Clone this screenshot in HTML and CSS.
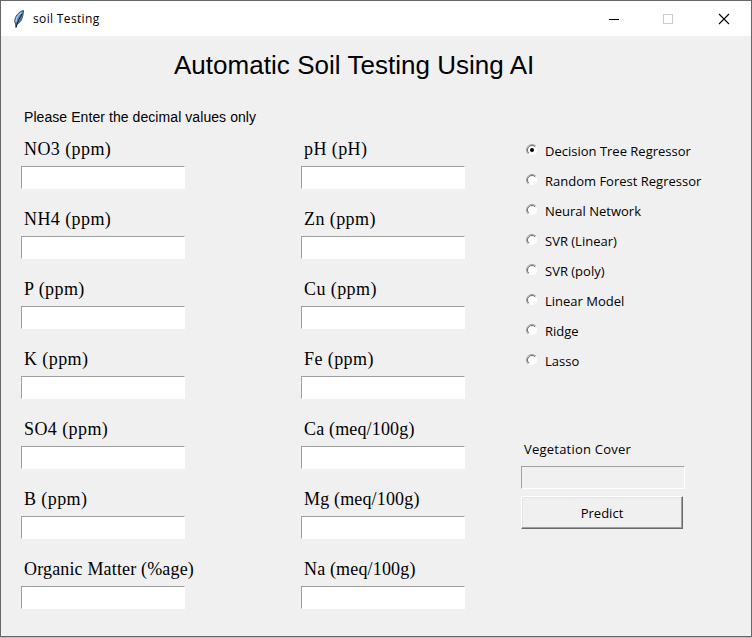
FILE: index.html
```html
<!DOCTYPE html>
<html lang="en">
<head>
<meta charset="utf-8">
<title>soil Testing</title>
<link rel="stylesheet" href="styles.css">
</head>
<body>
<div class="window">
  <header class="titlebar">
    <svg class="feather" width="12" height="18" viewBox="0 0 12 18"><path d="M10.500.5C7 1 3 5 2 9c-.5 2-.3 3.500.6 5l.4 3.500.8-3.500C8 13 10 8 10.500.5z" fill="#4b83b8" stroke="#4c535a" stroke-width="1"/><path d="M8.500 2.500C5 5 3 8.500 3 12" fill="none" stroke="#a9cbe5" stroke-width="1.300"/><path d="M9 4C7 8 4.500 11 3.200 17" fill="none" stroke="#111c28"/></svg>
    <span class="caption">soil Testing</span>
    <svg class="controls" width="124" height="12" viewBox="0 0 124 12" fill="none" shape-rendering="crispEdges"><path d="M1 6.500h10" stroke="#000"/><rect x="55.500" y="1.500" width="9" height="9" stroke="#ccc"/><path d="M111 1l10 10M121 1l-10 10" stroke="#000" stroke-width="1.100" shape-rendering="auto"/></svg>
  </header>
  <main class="client">
    <h1><span>Automatic Soil Testing Using AI</span></h1>
    <p class="hint">Please Enter the decimal values only</p>
    <div class="columns">
      <div class="fields">
        <label>NO3 (ppm)<input></label>
        <label>NH4 (ppm)<input></label>
        <label>P (ppm)<input></label>
        <label>K (ppm)<input></label>
        <label>SO4 (ppm)<input></label>
        <label>B (ppm)<input></label>
        <label class="tight">Organic Matter (%age)<input></label>
      </div>
      <div class="fields">
        <label>pH (pH)<input></label>
        <label>Zn (ppm)<input></label>
        <label>Cu (ppm)<input></label>
        <label>Fe (ppm)<input></label>
        <label class="tight">Ca (meq/100g)<input></label>
        <label class="tight">Mg (meq/100g)<input></label>
        <label class="tight">Na (meq/100g)<input></label>
      </div>
      <div class="side">
        <svg class="defs" width="0" height="0"><symbol id="radio" viewBox="0 0 12 12"><circle cx="6" cy="6" r="5" fill="#fff"/><path d="M2.100 9.900A5.500 5.500 0 0 1 9.900 2.100" fill="none" stroke="#a0a0a0"/><path d="M2.800 9.200A4.500 4.500 0 0 1 9.200 2.800" fill="none" stroke="#696969"/></symbol></svg>
        <div class="models">
          <div class="model"><svg><use href="#radio"/><circle cx="6" cy="6" r="2" fill="#000"/></svg><span>Decision Tree Regressor</span></div>
          <div class="model"><svg><use href="#radio"/></svg><span>Random Forest Regressor</span></div>
          <div class="model"><svg><use href="#radio"/></svg><span>Neural Network</span></div>
          <div class="model"><svg><use href="#radio"/></svg><span>SVR (Linear)</span></div>
          <div class="model"><svg><use href="#radio"/></svg><span>SVR (poly)</span></div>
          <div class="model"><svg><use href="#radio"/></svg><span>Linear Model</span></div>
          <div class="model"><svg><use href="#radio"/></svg><span>Ridge</span></div>
          <div class="model"><svg><use href="#radio"/></svg><span>Lasso</span></div>
        </div>
        <label class="result">Vegetation Cover<input readonly></label>
        <button>Predict</button>
      </div>
    </div>
  </main>
</div>
</body>
</html>
```
FILE: styles.css
```css
* { box-sizing: border-box; }
body { margin: 0; background: #c0c0c0; color: #000; font-family: "Open Sans", "Noto Sans", sans-serif; font-size: 13px; overflow: hidden; }
.window { width: 752px; height: 637px; border: 1px solid #666; background: #f0f0f0; }
.titlebar { height: 35px; background: #fff; display: flex; align-items: center; padding: 0 19px 0 12px; }
.feather { margin-right: 8px; }
.caption { font-size: 12px; letter-spacing: 0.35px; flex: 1; line-height: 34px; }
.client { padding-left: 20px; }
h1 { margin: 0; padding: 9px 0 0 153px; height: 66px; font: 26px/40px "Liberation Sans", Arial, sans-serif; letter-spacing: 0.03px; white-space: nowrap; }
.hint { margin: 0; padding-left: 3px; height: 33px; font: 14px/30px "Liberation Sans", Arial, sans-serif; letter-spacing: 0.07px; }
.columns { display: grid; grid-template-columns: 280px 220px 1fr; }
.fields { display: grid; grid-auto-rows: 70px; }
.fields label { font: 18px/29px "Liberation Serif", "Times New Roman", serif; letter-spacing: 0.42px; text-indent: 3px; }
.fields .tight { letter-spacing: 0.16px; }
input { display: block; width: 164px; height: 23px; margin: 2px 0 0; padding: 0 2px; border: 1px solid; border-color: #a0a0a0 #fff #fff #a0a0a0; border-radius: 0; background: #fff; outline: 0; }
.defs { display: block; }
.models { display: grid; grid-auto-rows: 30px; padding-top: 1px; }
.model { display: flex; align-items: center; padding-left: 5px; white-space: nowrap; }
.model svg { width: 12px; height: 12px; margin: -3px 7px 0 0; }
.result { display: block; margin-top: 59px; line-height: 28px; letter-spacing: 0.22px; text-indent: 3px; }
.result input { margin-top: 3px; background: #f0f0f0; }
button { display: block; width: 162px; height: 33px; margin-top: 7px; padding: 0; border: 1px solid; border-color: #fff #696969 #696969 #fff; box-shadow: inset -1px -1px #a0a0a0, inset 1px 1px #e3e3e3; border-radius: 0; background: #f0f0f0; font: inherit; color: inherit; }
```
